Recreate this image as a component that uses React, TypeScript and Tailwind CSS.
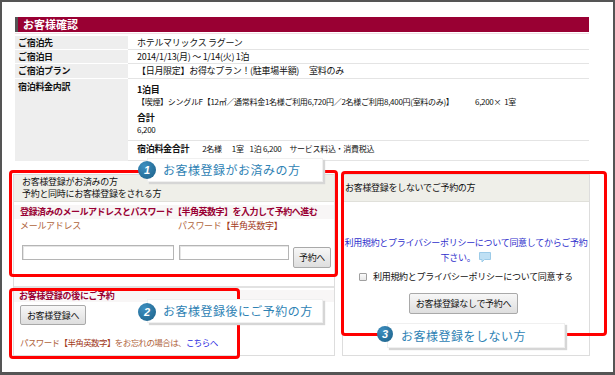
export default function App() {
  const btn =
    "flex items-center justify-center border border-[#a9a9a9] rounded-[2px] bg-[linear-gradient(#f7f7f7,#dedede)] text-[9px] text-[#111] leading-none whitespace-nowrap";
  const input = "h-[15px] border border-[#b5b5b5] bg-white shadow-[inset_1px_1px_0_#e6e6e6]";
  return (
    <div className="relative w-[615px] h-[375px] overflow-hidden border-2 border-b-[3px] border-[#555] bg-white text-[9px] text-[#111] tracking-[-0.3px] [font-family:'Noto_Sans_CJK_JP',sans-serif]">
      {/* top section */}
      <div className="pl-[13px] pt-[15px]">
        <div className="h-[15px] w-[574px] bg-[#990033] border-l-[3px] border-[#555] pl-[5px] text-white font-bold text-[11px] leading-[15px] tracking-normal">
          お客様確認
        </div>
        <div className="h-px w-[574px] bg-[#f2dfe5] mt-px" />
        <div className="mt-[2px] w-[574px] grid grid-cols-[113px_461px]">
          <div className="h-[14px] leading-[13px] bg-[#eeeeee] border-b border-white pl-[3px] font-bold">ご宿泊先</div>
          <div className="h-[14px] leading-[13px] border-b border-[#e4e4e4] pl-[9px]">ホテルマリックス ラグーン</div>
          <div className="h-[14px] leading-[13px] bg-[#eeeeee] border-b border-white pl-[3px] font-bold">ご宿泊日</div>
          <div className="h-[14px] leading-[13px] border-b border-[#e4e4e4] pl-[9px]">2014/1/13(月) ～ 1/14(火) 1泊</div>
          <div className="h-[15px] leading-[14px] bg-[#eeeeee] border-b border-white pl-[3px] font-bold">ご宿泊プラン</div>
          <div className="h-[15px] leading-[14px] border-b border-[#e4e4e4] pl-[9px] whitespace-nowrap">
            【日月限定】お得なプラン！(駐車場半額)<span className="ml-[10px]">室料のみ</span>
          </div>
          <div className="bg-[#eeeeee] pl-[3px] pt-[2px] leading-[12px] font-bold">宿泊料金内訳</div>
          <div>
            <div className="pl-[9px] pt-[5px] pb-[5px] border-b border-[#e4e4e4]">
              <div className="font-bold leading-[12px]">1泊目</div>
              <div className="flex text-[8px] leading-[11px] whitespace-nowrap">
                <span className="w-[338px]">【喫煙】シングルF【12㎡／通常料金1名様ご利用6,720円／2名様ご利用8,400円(室料のみ)】</span>
                <span>6,200×&nbsp;&nbsp;1室</span>
              </div>
              <div className="font-bold leading-[12px] mt-[5px]">合計</div>
              <div className="text-[8px] leading-[11px]">6,200</div>
            </div>
            <div className="pl-[9px] pt-[2px] pb-[5px] leading-[12px] border-b border-[#e4e4e4] flex items-baseline whitespace-nowrap">
              <span className="font-bold">宿泊料金合計</span>
              <span className="text-[8px] ml-[13px]">2名様</span>
              <span className="text-[8px] ml-[10px]">1室</span>
              <span className="text-[8px] ml-[6px]">1泊 6,200</span>
              <span className="text-[8px] ml-[8px]">サービス料込・消費税込</span>
            </div>
          </div>
        </div>
      </div>

      {/* lower section */}
      <div className="mt-[13px] ml-[11px] flex gap-[7px]">
        {/* left panel */}
        <div className="w-[322px] h-[182px] border border-[#dddddd]">
          <div className="h-[27px] bg-[#efefe9] border-b border-[#e0e0da] pl-[8px] pt-px leading-[12px]">
            <div>お客様登録がお済みの方</div>
            <div>予約と同時にお客様登録をされる方</div>
          </div>
          <div className="mt-[3px] h-[14px] bg-[#f8f6f6] pl-[6px] font-bold text-[#990033] leading-[14px] whitespace-nowrap tracking-[-0.5px]">
            登録済みのメールアドレスとパスワード【半角英数字】を入力して予約へ進む
          </div>
          <div className="mt-px flex leading-[12px] text-[#b0643c]">
            <span className="w-[164px] pl-[6px]">メールアドレス</span>
            <span>
              パスワード<span className="text-[#a23a1a]">【半角英数字】</span>
            </span>
          </div>
          <div className="mt-[13px] flex items-start pl-[8px]">
            <div className={`${input} w-[152px]`} />
            <div className={`${input} w-[110px] ml-[5px]`} />
            <div className={`${btn} w-[38px] h-[21px] ml-[4px] mt-[2px]`}>予約へ</div>
          </div>
          <div className="mt-[18px] h-[2px] bg-[#e2e2e2]" />
          <div className="mt-[2px] h-[12px] bg-[#f8f6f6] pl-[5px] font-bold text-[#990033] leading-[12px]">
            お客様登録の後にご予約
          </div>
          <div className={`${btn} w-[66px] h-[20px] ml-[6px] mt-[3px]`}>お客様登録へ</div>
          <div className="mt-[11px] pl-[6px] leading-[12px] text-[8.5px] tracking-[-0.6px] whitespace-nowrap text-[#b0643c]">
            パスワード<span className="text-[#a23a1a]">【半角英数字】</span>をお忘れの場合は、
            <span className="text-[#2424e0]">こちらへ</span>
          </div>
        </div>

        {/* right panel */}
        <div className="w-[248px] h-[182px] border border-[#dddddd]">
          <div className="h-[27px] bg-[#efefe9] border-b border-[#e0e0da] pl-[2px] leading-[26px]">
            お客様登録をしないでご予約の方
          </div>
          <div className="mt-[33px] text-center text-[#3030cc] leading-[15px] whitespace-nowrap">
            <div>利用規約とプライバシーポリシーについて同意してからご予約</div>
            <div className="flex justify-center items-center gap-[4px]">
              <span>下さい。</span>
              <svg width="12" height="11" viewBox="0 0 12 11">
                <path d="M0.5 0.5h11v7h-6l-2.5 2.5v-2.5h-2.5z" fill="#bfe0f4" stroke="#9ccbe8" strokeWidth="1" />
              </svg>
            </div>
          </div>
          <div className="mt-[5px] h-[14px] flex items-center pl-[16px]">
            <div className="w-[8px] h-[8px] border border-[#a0a0a0] rounded-[1px] bg-[linear-gradient(#fafafa,#e8e8e8)]" />
            <span className="ml-[6px] leading-[14px]">利用規約とプライバシーポリシーについて同意する</span>
          </div>
          <div className={`${btn} w-[109px] h-[21px] ml-[66px] mt-[9px]`}>お客様登録なしで予約へ</div>
        </div>
      </div>

      {/* red annotation boxes */}
      <div className="absolute left-[7px] top-[168px] w-[329px] h-[107px] border-[3px] border-[#ff0000] rounded-[4px]" />
      <div className="absolute left-[7px] top-[286px] w-[231px] h-[71px] border-[3px] border-[#ff0000] rounded-[4px]" />
      <div className="absolute left-[339px] top-[169px] w-[266px] h-[165px] border-[3px] border-[#ff0000] rounded-[4px]" />

      {/* callouts */}
      <Callout left={145} top={156} w={176} h={24} num="1" cx={136} cy={159} size={18} text="お客様登録がお済みの方" pad={15} />
      <Callout left={145} top={297} w={176} h={24} num="2" cx={136} cy={301} size={18} text="お客様登録後にご予約の方" pad={15} />
      <Callout left={385} top={321} w={178} h={25} num="3" cx={375} cy={324} size={16} text="お客様登録をしない方" pad={13} />
    </div>
  );
}

function Callout(props: {
  left: number;
  top: number;
  w: number;
  h: number;
  num: string;
  cx: number;
  cy: number;
  size: number;
  text: string;
  pad: number;
}) {
  const { left, top, w, h, num, cx, cy, size, text, pad } = props;
  return (
    <>
      <div
        className="absolute flex items-center bg-white border border-[#f0f0f0] shadow-[2px_2px_1px_#d6d6d6] text-[12px] tracking-[0.5px] text-[#2e82b4] whitespace-nowrap"
        style={{ left, top, width: w, height: h, paddingLeft: pad }}
      >
        {text}
      </div>
      <div
        className="absolute rounded-full bg-[radial-gradient(circle_at_35%_30%,#3d8fc0,#1b5f86)] flex items-center justify-center text-white font-bold italic text-[11px] leading-none [font-family:'Liberation_Sans',sans-serif]"
        style={{ left: cx, top: cy, width: size, height: size }}
      >
        {num}
      </div>
    </>
  );
}
